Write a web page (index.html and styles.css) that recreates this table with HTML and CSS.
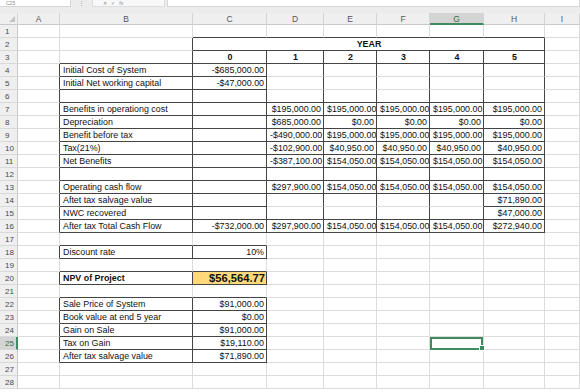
FILE: index.html
```html
<!DOCTYPE html>
<html>
<head>
<meta charset="utf-8">
<link rel="stylesheet" href="styles.css">
</head>
<body>
<div class="topband">
  <div class="fbar">
    <div class="namebox">C25</div>
    <div class="dots">⋮</div>
    <div class="fnbtns">✕ &nbsp; ✓ &nbsp; fx</div>
    <div class="finput"></div>
  </div>
</div>
<div class="sheet">
  <div class="corner"></div><div class="ch">A</div><div class="ch">B</div><div class="ch">C</div><div class="ch">D</div><div class="ch">E</div><div class="ch">F</div><div class="ch chsel">G</div><div class="ch">H</div><div class="ch">I</div>

  <div class="rh">1</div><div class="c"></div><div class="c"></div><div class="c b"></div><div class="c b"></div><div class="c b"></div><div class="c b"></div><div class="c b"></div><div class="c b"></div><div class="c"></div>

  <div class="rh">2</div><div class="c"></div><div class="c r"></div><div class="c r b t span6">YEAR</div><div class="c"></div>

  <div class="rh">3</div><div class="c"></div><div class="c r b"></div><div class="c r b t">0</div><div class="c r b t">1</div><div class="c r b t">2</div><div class="c r b t">3</div><div class="c r b t">4</div><div class="c r b t">5</div><div class="c"></div>

  <div class="rh">4</div><div class="c r"></div><div class="c r b">Initial Cost of System</div><div class="c r b n">-$685,000.00</div><div class="c r"></div><div class="c r"></div><div class="c r"></div><div class="c r"></div><div class="c r"></div><div class="c"></div>

  <div class="rh">5</div><div class="c r"></div><div class="c r b">Initial Net working capital</div><div class="c r b n">-$47,000.00</div><div class="c r"></div><div class="c r"></div><div class="c r"></div><div class="c r"></div><div class="c r"></div><div class="c"></div>

  <div class="rh">6</div><div class="c r"></div><div class="c r b"></div><div class="c r b"></div><div class="c r b"></div><div class="c r b"></div><div class="c r b"></div><div class="c r b"></div><div class="c r b"></div><div class="c"></div>

  <div class="rh">7</div><div class="c r"></div><div class="c r b">Benefits in operationg cost</div><div class="c r b"></div><div class="c r b n">$195,000.00</div><div class="c r b n">$195,000.00</div><div class="c r b n">$195,000.00</div><div class="c r b n">$195,000.00</div><div class="c r b n">$195,000.00</div><div class="c"></div>

  <div class="rh">8</div><div class="c r"></div><div class="c r b">Depreciation</div><div class="c r b"></div><div class="c r b n">$685,000.00</div><div class="c r b n">$0.00</div><div class="c r b n">$0.00</div><div class="c r b n">$0.00</div><div class="c r b n">$0.00</div><div class="c"></div>

  <div class="rh">9</div><div class="c r"></div><div class="c r b">Benefit before tax</div><div class="c r b"></div><div class="c r b n">-$490,000.00</div><div class="c r b n">$195,000.00</div><div class="c r b n">$195,000.00</div><div class="c r b n">$195,000.00</div><div class="c r b n">$195,000.00</div><div class="c"></div>

  <div class="rh">10</div><div class="c r"></div><div class="c r b">Tax(21%)</div><div class="c r b"></div><div class="c r b n">-$102,900.00</div><div class="c r b n">$40,950.00</div><div class="c r b n">$40,950.00</div><div class="c r b n">$40,950.00</div><div class="c r b n">$40,950.00</div><div class="c"></div>

  <div class="rh">11</div><div class="c r"></div><div class="c r b">Net Benefits</div><div class="c r b"></div><div class="c r b n">-$387,100.00</div><div class="c r b n">$154,050.00</div><div class="c r b n">$154,050.00</div><div class="c r b n">$154,050.00</div><div class="c r b n">$154,050.00</div><div class="c"></div>

  <div class="rh">12</div><div class="c r"></div><div class="c r b"></div><div class="c r b"></div><div class="c r b"></div><div class="c r b"></div><div class="c r b"></div><div class="c r b"></div><div class="c r b"></div><div class="c"></div>

  <div class="rh">13</div><div class="c r"></div><div class="c r b">Operating cash flow</div><div class="c r b"></div><div class="c r b n">$297,900.00</div><div class="c r b n">$154,050.00</div><div class="c r b n">$154,050.00</div><div class="c r b n">$154,050.00</div><div class="c r b n">$154,050.00</div><div class="c"></div>

  <div class="rh">14</div><div class="c r"></div><div class="c r b">Aftet tax salvage value</div><div class="c r b"></div><div class="c r"></div><div class="c r"></div><div class="c r"></div><div class="c r"></div><div class="c r b n">$71,890.00</div><div class="c"></div>

  <div class="rh">15</div><div class="c r"></div><div class="c r b">NWC recovered</div><div class="c r b"></div><div class="c r b"></div><div class="c r b"></div><div class="c r b"></div><div class="c r b"></div><div class="c r b n">$47,000.00</div><div class="c"></div>

  <div class="rh">16</div><div class="c r"></div><div class="c r b">After tax Total Cash Flow</div><div class="c r b n">-$732,000.00</div><div class="c r b n">$297,900.00</div><div class="c r b n">$154,050.00</div><div class="c r b n">$154,050.00</div><div class="c r b n">$154,050.00</div><div class="c r b n">$272,940.00</div><div class="c"></div>

  <div class="rh">17</div><div class="c"></div><div class="c b"></div><div class="c b"></div><div class="c"></div><div class="c"></div><div class="c"></div><div class="c"></div><div class="c"></div><div class="c"></div>

  <div class="rh">18</div><div class="c r"></div><div class="c r b">Discount rate</div><div class="c r b n">10%</div><div class="c"></div><div class="c"></div><div class="c"></div><div class="c"></div><div class="c"></div><div class="c"></div>

  <div class="rh">19</div><div class="c"></div><div class="c b"></div><div class="c b"></div><div class="c"></div><div class="c"></div><div class="c"></div><div class="c"></div><div class="c"></div><div class="c"></div>

  <div class="rh">20</div><div class="c r"></div><div class="c r b bold">NPV of Project</div><div class="c r b n npv">$56,564.77</div><div class="c"></div><div class="c"></div><div class="c"></div><div class="c"></div><div class="c"></div><div class="c"></div>

  <div class="rh">21</div><div class="c"></div><div class="c b"></div><div class="c b"></div><div class="c"></div><div class="c"></div><div class="c"></div><div class="c"></div><div class="c"></div><div class="c"></div>

  <div class="rh">22</div><div class="c r"></div><div class="c r b">Sale Price of System</div><div class="c r b n">$91,000.00</div><div class="c"></div><div class="c"></div><div class="c"></div><div class="c"></div><div class="c"></div><div class="c"></div>

  <div class="rh">23</div><div class="c r"></div><div class="c r b">Book value at end 5 year</div><div class="c r b n">$0.00</div><div class="c"></div><div class="c"></div><div class="c"></div><div class="c"></div><div class="c"></div><div class="c"></div>

  <div class="rh">24</div><div class="c r"></div><div class="c r b">Gain on Sale</div><div class="c r b n">$91,000.00</div><div class="c"></div><div class="c"></div><div class="c"></div><div class="c"></div><div class="c"></div><div class="c"></div>

  <div class="rh rhsel">25</div><div class="c r"></div><div class="c r b">Tax on Gain</div><div class="c r b n">$19,110.00</div><div class="c"></div><div class="c"></div><div class="c"></div><div class="c sel"></div><div class="c"></div><div class="c"></div>

  <div class="rh">26</div><div class="c r"></div><div class="c r b">After tax salvage value</div><div class="c r b n">$71,890.00</div><div class="c"></div><div class="c"></div><div class="c"></div><div class="c"></div><div class="c"></div><div class="c"></div>

  <div class="rh">27</div><div class="c"></div><div class="c"></div><div class="c"></div><div class="c"></div><div class="c"></div><div class="c"></div><div class="c"></div><div class="c"></div><div class="c"></div>

  <div class="rh">28</div><div class="c"></div><div class="c"></div><div class="c"></div><div class="c"></div><div class="c"></div><div class="c"></div><div class="c"></div><div class="c"></div><div class="c"></div>
</div>
</body>
</html>
```

FILE: styles.css
```css
* { box-sizing: border-box; }
html, body {
  margin: 0;
  padding: 0;
  background: #ffffff;
  overflow: hidden;
  font-family: "Liberation Sans", Arial, sans-serif;
}

.topband {
  height: 13px;
  background: #ececec;
}
.fbar {
  height: 7px;
  display: flex;
}
.fbar > div {
  height: 7px;
  flex: none;
  font-size: 5px;
  line-height: 6px;
  color: #8a8a8a;
  white-space: nowrap;
  overflow: visible;
}
.namebox {
  width: 71px;
  background: #fff;
  border-right: 1px solid #d6d6d6;
  border-bottom: 1px solid #d6d6d6;
  padding-left: 6px;
}
.dots {
  width: 21px;
  text-align: center;
  color: #aaa;
}
.fnbtns {
  width: 73px;
  background: #f8f8f8;
  border: 1px solid #dedede;
  border-top: 0;
  padding-left: 10px;
  color: #999;
}
.finput {
  flex: 1 1 auto !important;
  margin-left: 2px;
  background: #fff;
  border: 1px solid #d6d6d6;
  border-top: 0;
}

.sheet {
  display: grid;
  grid-template-columns: 18px 42px 133px 74px 57px 53px 53px 54px 61px 1fr;
  grid-template-rows: 12px;
  grid-auto-rows: 13px;
  width: 580px;
}

.corner {
  background: #efefef;
  border-right: 1px solid #d4d4d4;
  border-bottom: 1px solid #c9c9c9;
  position: relative;
}
.corner::after {
  content: "";
  position: absolute;
  right: 2px;
  bottom: 2px;
  width: 6px;
  height: 6px;
  background: #c4c4c4;
  clip-path: polygon(100% 0, 100% 100%, 0 100%);
}

.ch {
  background: #efefef;
  border-right: 1px solid #d4d4d4;
  border-bottom: 1px solid #c9c9c9;
  text-align: center;
  font-size: 8.5px;
  line-height: 12px;
  color: #555;
}
.chsel {
  background: #d4d4d4;
  border-bottom: 2px solid #3f8a5e;
  color: #2f6e4a;
}

.rh {
  background: #efefef;
  border-right: 1px solid #c9c9c9;
  border-bottom: 1px solid #d9d9d9;
  font-size: 8px;
  line-height: 13px;
  padding-left: 5px;
  color: #4a4a4a;
}
.rhsel {
  background: #d4d4d4;
  border-right: 2px solid #3f8a5e;
  color: #2f6e4a;
}

.c {
  border-right: 1px solid #dcdcdc;
  border-bottom: 1px solid #dcdcdc;
  font-size: 8.9px;
  line-height: 13px;
  padding: 0 2px 0 3px;
  white-space: nowrap;
  overflow: hidden;
  color: #111;
}
.c.r { border-right-color: #444; }
.c.b { border-bottom-color: #444; }
.n { text-align: right; }
.t { text-align: center; font-weight: bold; }
.bold { font-weight: bold; }
.span6 { grid-column: span 6; }

.npv {
  background: #ffd97c;
  font-weight: bold;
  font-size: 11.2px;
  line-height: 13px;
  padding-right: 1px;
}

.sel {
  position: relative;
  overflow: visible;
}
.sel::before {
  content: "";
  position: absolute;
  left: 0;
  top: 0;
  right: 0;
  bottom: -1px;
  border: 2px solid #3f8a5e;
}
.sel::after {
  content: "";
  position: absolute;
  right: -2px;
  bottom: -2px;
  width: 4px;
  height: 4px;
  background: #3f8a5e;
  border: 1px solid #fff;
}
```
